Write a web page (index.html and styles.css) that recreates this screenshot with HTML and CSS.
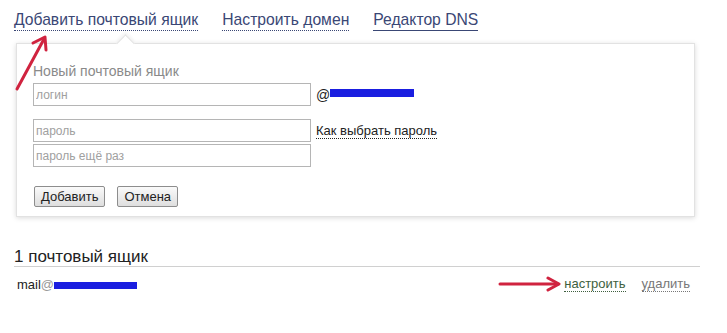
FILE: index.html
```html
<!DOCTYPE html>
<html lang="ru">
<head>
  <meta charset="UTF-8">
  <title>Почта для домена</title>
  <link rel="stylesheet" href="styles.css">
</head>
<body>
  <div class="page">
    <div class="tabs">
      <a class="tab dotted" href="#">Добавить почтовый ящик</a>
      <a class="tab dotted" href="#">Настроить домен</a>
      <a class="tab solid" href="#">Редактор DNS</a>
    </div>

    <div class="panel">
      <div class="panel-title">Новый почтовый ящик</div>
      <div class="form-row">
        <input class="field" type="text" placeholder="логин">
        <span class="domain">@<span class="mask"></span></span>
      </div>
      <div class="form-row gap-top">
        <input class="field" type="password" placeholder="пароль">
        <a class="hint" href="#">Как выбрать пароль</a>
      </div>
      <div class="form-row">
        <input class="field" type="password" placeholder="пароль ещё раз">
      </div>
      <div class="buttons">
        <button class="btn">Добавить</button>
        <button class="btn">Отмена</button>
      </div>
    </div>

    <div class="list">
      <div class="list-title">1 почтовый ящик</div>
      <div class="mailbox">
        <span class="address">mail<span class="at">@</span><span class="mask small"></span></span>
        <span class="actions">
          <a class="act setup" href="#">настроить</a>
          <a class="act remove" href="#">удалить</a>
        </span>
      </div>
    </div>

    <!-- red annotation arrows -->
    <svg class="arrow arrow-up" width="40" height="60" viewBox="0 0 40 60">
      <path d="M3 56 L30 6" stroke="#d0233f" stroke-width="3" fill="none" stroke-linecap="round"/>
      <path d="M19 10 L31 4 L32 17" stroke="#d0233f" stroke-width="3" fill="none" stroke-linecap="round" stroke-linejoin="round"/>
    </svg>
    <svg class="arrow arrow-right" width="64" height="16" viewBox="0 0 64 16">
      <path d="M2 8 L60 8" stroke="#d0233f" stroke-width="3" fill="none" stroke-linecap="round"/>
      <path d="M50 2 L61 8 L50 14" stroke="#d0233f" stroke-width="3" fill="none" stroke-linecap="round" stroke-linejoin="round"/>
    </svg>
  </div>
</body>
</html>
```

FILE: styles.css
```css
/* General */
body {
  margin: 0;
  background: #fff;
  font-family: 'Liberation Sans', Arial, sans-serif;
  color: #333;
}

.page {
  position: relative;
  width: 727px;
  height: 333px;
  padding: 11px 0 0 14px;
  box-sizing: border-box;
}

/* Tabs */
.tabs {
  display: flex;
  gap: 24px;
  font-size: 15.7px;
  line-height: 18px;
}

.tab {
  color: #3a4775;
  text-decoration: none;
  padding-bottom: 1px;
}

.tab.dotted {
  border-bottom: 1px dotted #3a4775;
}

.tab.solid {
  border-bottom: 1px solid #3a4775;
}

/* Panel */
.panel {
  position: relative;
  margin: 12px 0 0 2px;
  width: 679px;
  height: 174px;
  box-sizing: border-box;
  padding: 19px 0 0 16px;
  border: 1px solid #e2e2e2;
  box-shadow: 0 1px 5px rgba(0, 0, 0, 0.15);
  background: #fff;
}

.panel::before {
  content: '';
  position: absolute;
  top: -7px;
  left: 102px;
  width: 12px;
  height: 12px;
  background: #fff;
  border-left: 1px solid #e2e2e2;
  border-top: 1px solid #e2e2e2;
  transform: rotate(45deg);
  box-shadow: -2px -2px 3px rgba(0, 0, 0, 0.05);
}

.panel-title {
  font-size: 14px;
  line-height: 16px;
  color: #8a8a8a;
  margin-bottom: 4px;
}

.form-row {
  display: flex;
  align-items: center;
  gap: 5px;
  margin-bottom: 2px;
}

.form-row.gap-top {
  margin-top: 13px;
}

.field {
  width: 278px;
  height: 23px;
  box-sizing: border-box;
  margin: 0;
  padding: 0 2px;
  border: 1px solid #b5b5b5;
  font-family: 'Liberation Sans', Arial, sans-serif;
  font-size: 12px;
  color: #333;
}

.field::placeholder {
  color: #a0a0a0;
}

.domain {
  display: flex;
  align-items: center;
  font-size: 14px;
  color: #222;
}

.mask {
  display: inline-block;
  width: 84px;
  height: 8px;
  background: #1a1ee0;
  margin-top: -4px;
}

.mask.small {
  width: 83px;
  height: 7px;
  margin-top: 2px;
}

.hint {
  font-size: 13px;
  color: #222;
  text-decoration: none;
  border-bottom: 1px dotted #222;
  line-height: 15px;
}

.buttons {
  display: flex;
  gap: 12px;
  margin-top: 19px;
  padding-left: 1px;
}

.btn {
  height: 21px;
  padding: 0 6px;
  font-family: 'Liberation Sans', Arial, sans-serif;
  font-size: 13px;
  color: #222;
  border: 1px solid #8d8d8d;
  border-radius: 2px;
  background: linear-gradient(#fafafa, #dedede);
}

/* Mailbox list */
.list {
  margin-top: 30px;
  width: 686px;
}

.list-title {
  font-size: 17px;
  line-height: 19px;
  color: #222;
  padding-bottom: 0;
  border-bottom: 1px solid #d0d0d0;
}

.mailbox {
  display: flex;
  justify-content: space-between;
  align-items: center;
  padding: 9px 10px 0 3px;
  font-size: 13px;
}

.address {
  display: flex;
  align-items: center;
  color: #222;
}

.at {
  color: #999;
}

.actions {
  display: flex;
  gap: 16px;
}

.act {
  text-decoration: none;
  border-bottom: 1px dotted;
  line-height: 15px;
}

.act.setup {
  color: #3e5f3e;
}

.act.remove {
  color: #777;
}

/* Annotations */
.arrow {
  position: absolute;
}

.arrow-up {
  left: 14px;
  top: 33px;
}

.arrow-right {
  left: 498px;
  top: 276px;
}
```
